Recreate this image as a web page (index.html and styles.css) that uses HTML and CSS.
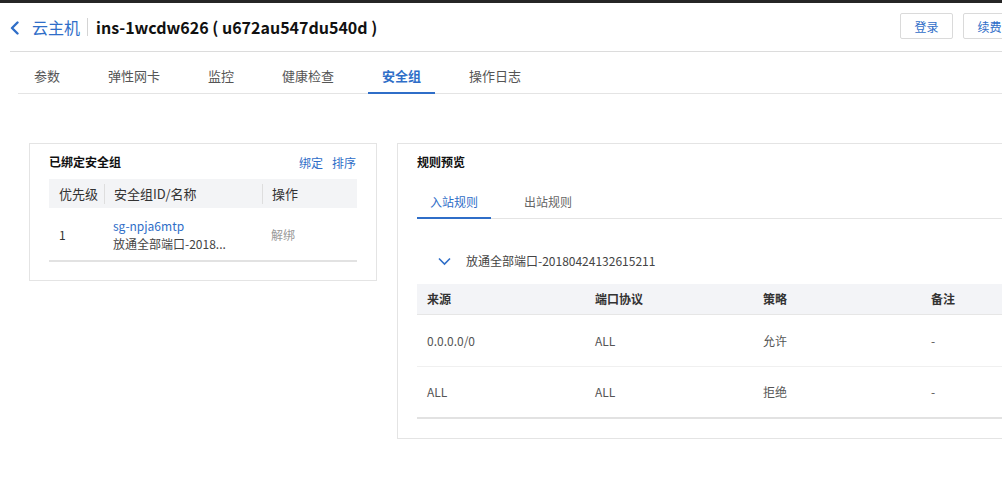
FILE: index.html
```html
<!DOCTYPE html>
<html lang="zh-CN">
<head>
<meta charset="utf-8">
<title>安全组</title>
<link rel="stylesheet" href="styles.css">
</head>
<body>
<div class="page">
  <div class="topbar"></div>
  <header class="header">
    <a class="back" href="#"><svg width="9" height="14" viewBox="0 0 9 14"><path d="M7.5 1.5 L2 7 L7.5 12.5" fill="none" stroke="#2f6ec8" stroke-width="2.4" stroke-linecap="round" stroke-linejoin="round"/></svg></a>
    <a class="crumb" href="#">云主机</a>
    <span class="sep"></span>
    <h1 class="title">ins-1wcdw626 ( u672au547du540d )</h1>
    <div class="actions">
      <button class="btn">登录</button>
      <button class="btn">续费</button>
    </div>
  </header>
  <nav class="tabs">
    <a class="tab">参数</a>
    <a class="tab">弹性网卡</a>
    <a class="tab">监控</a>
    <a class="tab">健康检查</a>
    <a class="tab active">安全组</a>
    <a class="tab">操作日志</a>
  </nav>
  <main class="content">
    <section class="card bound">
      <div class="card-head">
        <h2 class="card-title">已绑定安全组</h2>
        <div class="links"><a href="#">绑定</a><a href="#">排序</a></div>
      </div>
      <table class="sg-table">
        <thead>
          <tr><th class="c1"><span>优先级</span></th><th class="c2"><span>安全组ID/名称</span></th><th class="c3"><span>操作</span></th></tr>
        </thead>
        <tbody>
          <tr>
            <td class="c1">1</td>
            <td class="c2"><a class="sg-id" href="#">sg-npja6mtp</a><div class="sg-name">放通全部端口-2018...</div></td>
            <td class="c3 muted">解绑</td>
          </tr>
        </tbody>
      </table>
    </section>
    <section class="card rules">
      <h2 class="card-title rules-title">规则预览</h2>
      <div class="subtabs">
        <a class="subtab active">入站规则</a>
        <a class="subtab">出站规则</a>
      </div>
      <div class="group">
        <svg class="chev" width="13" height="9" viewBox="0 0 13 9"><path d="M1 1.5 L6.5 7 L12 1.5" fill="none" stroke="#2f6ec8" stroke-width="1.6"/></svg>
        <span>放通全部端口-20180424132615211</span>
      </div>
      <table class="rule-table">
        <thead>
          <tr><th>来源</th><th>端口协议</th><th>策略</th><th>备注</th></tr>
        </thead>
        <tbody>
          <tr><td>0.0.0.0/0</td><td>ALL</td><td>允许</td><td>-</td></tr>
          <tr><td>ALL</td><td>ALL</td><td>拒绝</td><td>-</td></tr>
        </tbody>
      </table>
    </section>
  </main>
</div>
</body>
</html>
```

FILE: styles.css
```css
html, body {
  margin: 0;
  padding: 0;
  background: #fff;
  overflow: hidden;
}
body {
  font-family: "Noto Sans CJK SC", "Liberation Sans", sans-serif;
  color: #333;
  font-size: 12px;
}
a { text-decoration: none; color: inherit; }
.page { width: 1100px; }
.topbar { height: 3px; background: #262626; }

.header {
  margin-left: 10px;
  height: 48px;
  border-bottom: 1px solid #dcdcdc;
  display: flex;
  align-items: center;
}
.back { display: flex; width: 22px; padding-top: 1px; }
.crumb { color: #2f6ec8; font-size: 16px; line-height: 20px; }
.sep { width: 1px; height: 18px; background: #d4d4d4; margin: 0 8px 0 7px; }
.title { margin: 0; font-size: 16px; font-weight: 700; color: #111; line-height: 20px; }
.actions { margin-left: auto; display: flex; gap: 10px; padding-right: 84px; margin-top: -2px; }
.btn {
  width: 53px; height: 26px;
  border: 1px solid #dadada;
  border-radius: 2px;
  background: #fff;
  color: #2f6ec8;
  font-family: inherit;
  font-size: 12px;
  padding: 0;
}

.tabs {
  margin-left: 18px;
  padding-left: 2px;
  display: flex;
  gap: 20px;
  border-bottom: 1px solid #e4e4e4;
}
.tab {
  padding: 14px 14px 6px;
  line-height: 20px;
  font-size: 13px;
  color: #555;
  border-bottom: 2px solid transparent;
  margin-bottom: -1px;
}
.tab.active { color: #2f6ec8; font-weight: 700; border-bottom-color: #2f6ec8; }

.content {
  display: flex;
  align-items: flex-start;
  gap: 20px;
  padding: 49px 0 0 29px;
}
.card {
  border: 1px solid #e4e4e4;
  box-sizing: border-box;
  padding: 0 19px;
}
.card-title { margin: 0; font-size: 12px; font-weight: 700; color: #111; line-height: 18px; }

.bound { width: 348px; padding-bottom: 18px; }
.card-head { height: 35px; display: flex; align-items: center; justify-content: space-between; padding-top: 1px; box-sizing: border-box; }
.links { display: flex; gap: 9px; color: #2f6ec8; font-size: 12px; padding-right: 1px; }
.links a { color: #2f6ec8; }

.sg-table { width: 100%; border-collapse: collapse; table-layout: fixed; }
.sg-table th {
  background: #f3f4f6;
  height: 29px;
  padding: 0;
  font-weight: 400;
  font-size: 13px;
  text-align: left;
  color: #333;
}
.sg-table th span { display: block; padding-left: 9px; border-left: 1px solid #dedede; line-height: 20px; }
.sg-table th.c1 span { border-left-color: transparent; }
.sg-table .c1 { width: 55px; }
.sg-table .c2 { width: 158px; }
.sg-table td {
  padding: 8px 0 7px 9px;
  height: 37px;
  border-bottom: 2px solid #e2e2e2;
  vertical-align: middle;
  font-size: 12px;
  color: #333;
  line-height: 18px;
}
.sg-table td.c1 { padding-left: 10px; }
.sg-id { color: #2f6ec8; display: block; }
.sg-name { color: #444; }
.sg-table td.muted { color: #9a9a9a; }

.rules { flex: 1; padding-bottom: 19px; }
.rules-title { padding-top: 9px; height: 26px; }
.subtabs { display: flex; gap: 20px; border-bottom: 1px solid #e4e4e4; margin-right: -19px; }
.subtab {
  padding: 13px 13px 5px;
  line-height: 20px;
  font-size: 12px;
  color: #666;
  border-bottom: 2px solid transparent;
  margin-bottom: -1px;
}
.subtab.active { color: #2f6ec8; border-bottom-color: #2f6ec8; }

.group {
  display: flex;
  align-items: center;
  padding: 33px 0 14px 21px;
  line-height: 18px;
  font-size: 12px;
  color: #444;
}
.chev { margin-right: 15px; margin-top: 1px; }

.rule-table { width: 100%; border-collapse: collapse; table-layout: fixed; margin-right: -19px; }
.rule-table th, .rule-table td { width: 168px; text-align: left; padding: 0 0 0 10px; box-sizing: border-box; }
.rule-table th {
  background: #f3f4f7;
  height: 30px;
  font-weight: 700;
  font-size: 12px;
  color: #333;
  border-bottom: 1px solid #e6e6e6;
}
.rule-table td {
  height: 52px;
  font-size: 12px;
  color: #555;
  border-bottom: 1px solid #f0f0f0;
}
.rule-table tbody tr:last-child td { border-bottom: 2px solid #e2e2e2; }
```
